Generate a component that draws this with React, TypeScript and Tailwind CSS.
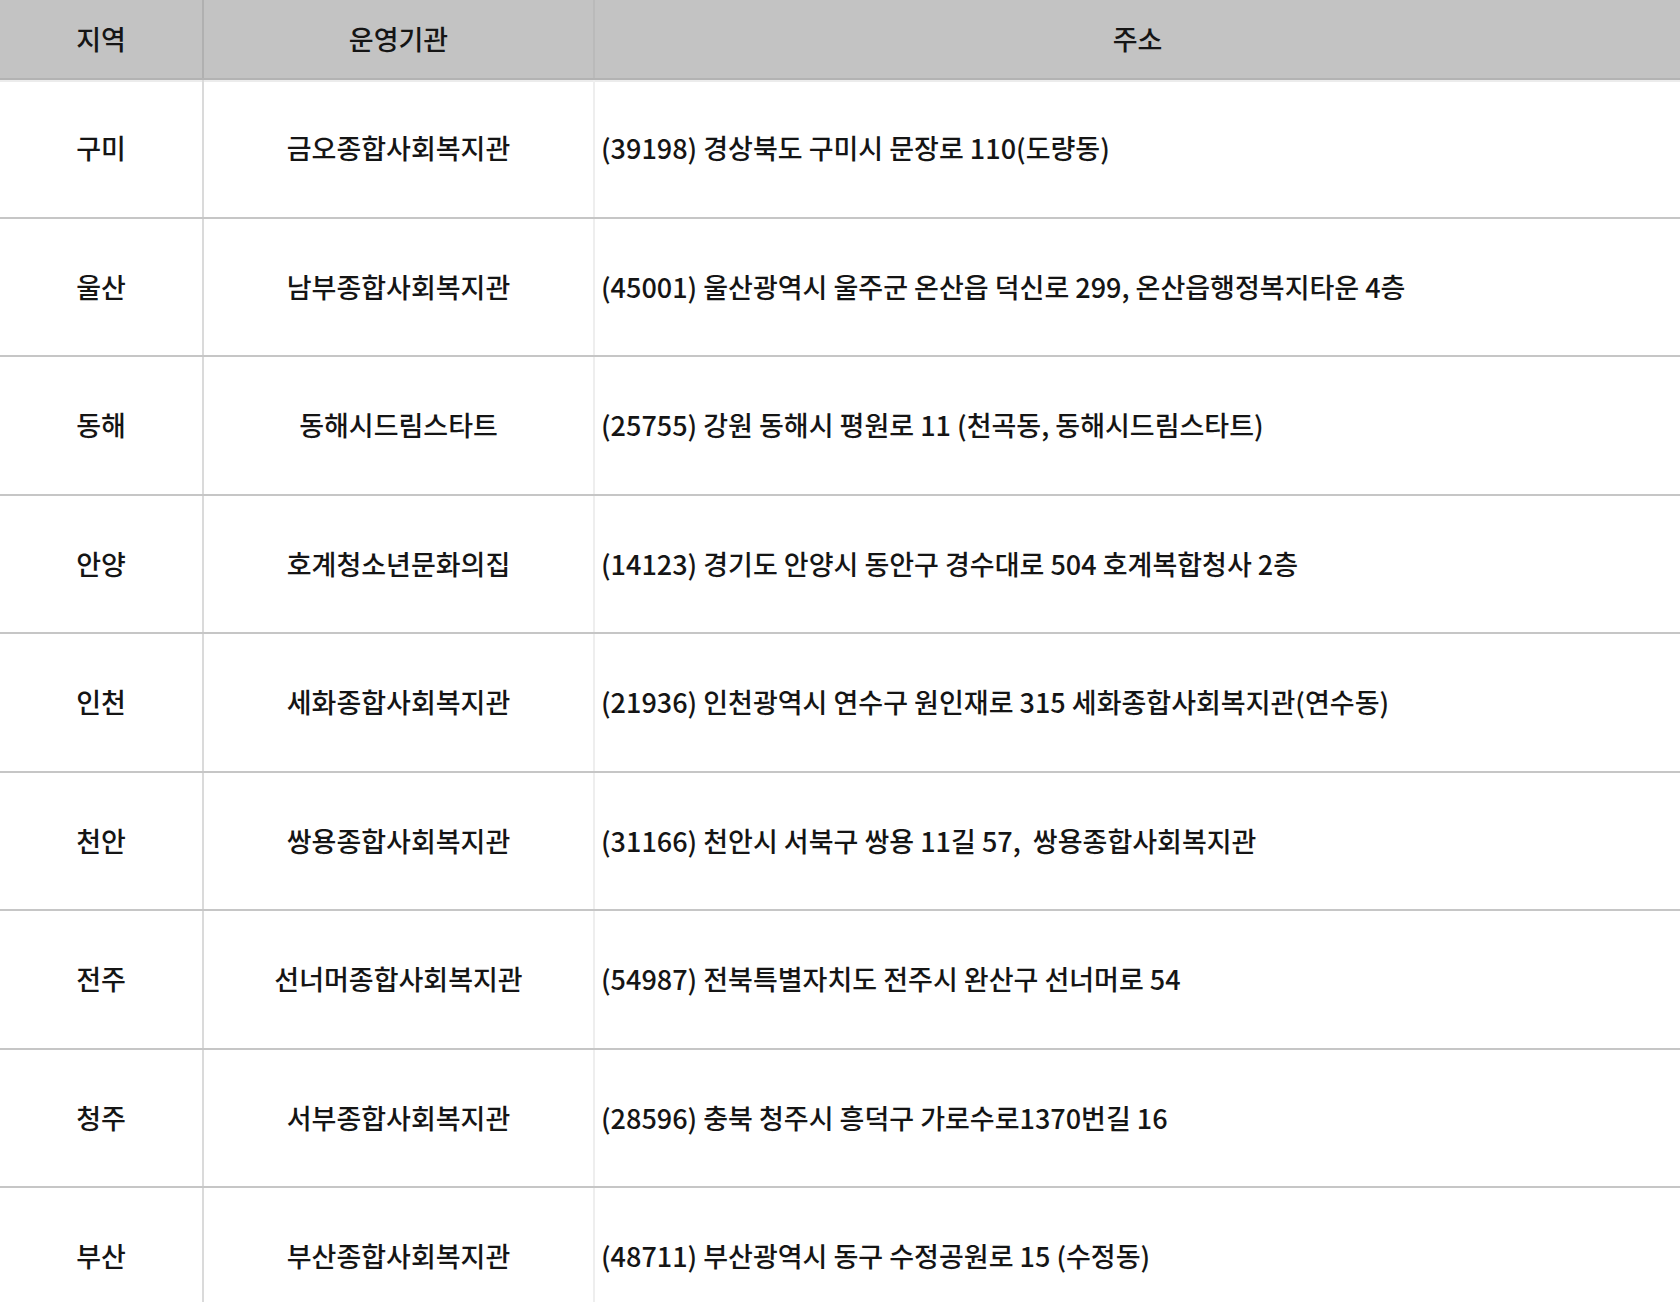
import React from 'react';

const rows = [
  { region: '구미', org: '금오종합사회복지관', addr: '(39198) 경상북도 구미시 문장로 110(도량동)' },
  { region: '울산', org: '남부종합사회복지관', addr: '(45001) 울산광역시 울주군 온산읍 덕신로 299, 온산읍행정복지타운 4층' },
  { region: '동해', org: '동해시드림스타트', addr: '(25755) 강원 동해시 평원로 11 (천곡동, 동해시드림스타트)' },
  { region: '안양', org: '호계청소년문화의집', addr: '(14123) 경기도 안양시 동안구 경수대로 504 호계복합청사 2층' },
  { region: '인천', org: '세화종합사회복지관', addr: '(21936) 인천광역시 연수구 원인재로 315 세화종합사회복지관(연수동)' },
  { region: '천안', org: '쌍용종합사회복지관', addr: '(31166) 천안시 서북구 쌍용 11길 57,  쌍용종합사회복지관' },
  { region: '전주', org: '선너머종합사회복지관', addr: '(54987) 전북특별자치도 전주시 완산구 선너머로 54' },
  { region: '청주', org: '서부종합사회복지관', addr: '(28596) 충북 청주시 흥덕구 가로수로1370번길 16' },
  { region: '부산', org: '부산종합사회복지관', addr: '(48711) 부산광역시 동구 수정공원로 15 (수정동)' },
];

const App: React.FC = () => {
  return (
    <div
      className="w-[1680px] h-[1302px] overflow-hidden bg-white text-[#151515] text-[27px] font-medium"
      style={{ fontFamily: '"Noto Sans CJK KR", "Noto Sans", sans-serif' }}
    >
      {/* header */}
      <div className="grid grid-cols-[204px_391px_1fr] h-[80px] bg-[#c3c3c3] border-b-2 border-[#b3b3b3] shadow-[0_2px_0_#ececec]">
        <div className="flex items-center justify-center border-r-2 border-[#b0b0b0]">지역</div>
        <div className="flex items-center justify-center border-r-2 border-[#bababa]">운영기관</div>
        <div className="flex items-center justify-center">주소</div>
      </div>

      {rows.map((r) => (
        <div
          key={r.region}
          className="grid grid-cols-[204px_391px_1fr] h-[138.5px] border-b-2 border-[#c6c6c6]"
        >
          <div className="flex items-center justify-center border-r-2 border-[#dadada]">{r.region}</div>
          <div className="flex items-center justify-center border-r-2 border-[#eeeeee]">{r.org}</div>
          <div className="flex items-center pl-[6px] whitespace-pre">{r.addr}</div>
        </div>
      ))}
    </div>
  );
};

export default App;
